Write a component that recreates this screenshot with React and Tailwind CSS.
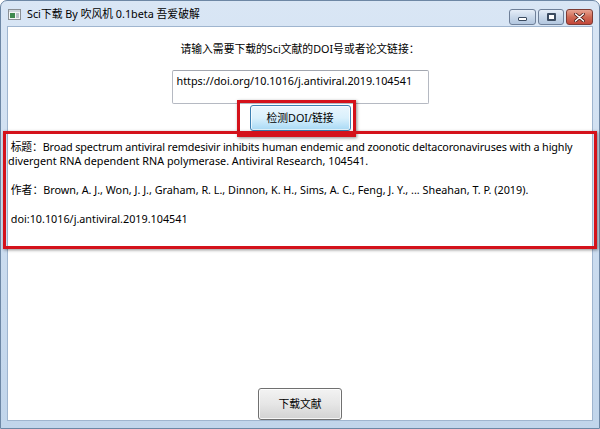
export default function App() {
  const ui = { fontFamily: '"Noto Sans", "Noto Sans CJK SC", sans-serif' };

  return (
    <div className="w-[600px] h-[429px] bg-white text-[10.8px] text-black" style={ui}>
      <div className="relative h-full flex flex-col rounded-t-[7px] border border-[#6d87a5] bg-gradient-to-b from-[#d9e6f5] to-[#c1d5eb]">
        {/* title bar */}
        <div className="h-[25px] flex items-center pl-[7px] pr-[6px]">
          <svg width="13" height="11" viewBox="0 0 13 11" className="mt-[1px]">
            <rect x="0.5" y="0.5" width="12" height="10" fill="#f4f6f6" stroke="#8a8f94" />
            <rect x="1" y="1" width="11" height="2" fill="#cfd6dc" />
            <rect x="2" y="4" width="5" height="5" fill="#3f8a4e" />
            <rect x="8" y="4" width="3" height="5" fill="#b9c2c8" />
          </svg>
          <span className="ml-[6px] text-[10.8px] leading-[16px]">Sci下载 By 吹风机 0.1beta 吾爱破解</span>

          <div className="ml-auto self-end mb-[1px] flex gap-[2px]">
            <div className="w-[27px] h-[16px] rounded-[3px] border border-[#6e7f98] bg-gradient-to-b from-[#e6eef8] via-[#c9d8ea] to-[#b3c7df] flex items-center justify-center">
              <div className="w-[9px] h-[4px] mt-[4px] rounded-[1px] border border-[#3b4b60] bg-white" />
            </div>
            <div className="w-[26px] h-[16px] rounded-[3px] border border-[#6e7f98] bg-gradient-to-b from-[#e6eef8] via-[#c9d8ea] to-[#b3c7df] flex items-center justify-center">
              <div className="w-[9px] h-[8px] rounded-[1px] border-2 border-[#3b4b60] bg-white" />
            </div>
            <div className="w-[27px] h-[16px] rounded-[3px] border border-[#7c3b34] bg-gradient-to-b from-[#e7a392] via-[#cf6a55] to-[#c2463a] flex items-center justify-center">
              <svg width="11" height="9" viewBox="0 0 11 9">
                <path d="M1.5 1 L9.5 8 M9.5 1 L1.5 8" stroke="#4a1a16" strokeWidth="3" strokeLinecap="round" />
                <path d="M1.5 1 L9.5 8 M9.5 1 L1.5 8" stroke="#ffffff" strokeWidth="1.6" strokeLinecap="round" />
              </svg>
            </div>
          </div>
        </div>

        {/* client area */}
        <div className="flex-1 mx-[6px] mb-[7px] bg-white border border-[#9fb5cf] flex flex-col items-center">
          <p className="mt-[14px] leading-[16px]">请输入需要下载的Sci文献的DOI号或者论文链接：</p>

          <div className="mt-[13px] w-[257px] h-[34px] rounded-[2px] border border-[#b5b9c2] border-t-[#a3a7b0] px-[4px] pt-[2px] leading-[16px]">
            https://doi.org/10.1016/j.antiviral.2019.104541
          </div>

          <button className="mt-[1px] w-[101px] h-[26px] rounded-[3px] border border-[#3c7fb1] bg-gradient-to-b from-[#eaf6fd] via-[#d9f0fc] to-[#a7d9f5] shadow-[inset_0_0_0_1px_rgba(255,255,255,0.7)] leading-[16px]">
            检测DOI/链接
          </button>

          <div className="self-stretch mt-[9px] leading-[14.4px]">
            <p>
              <span className="tracking-[-0.12px]">
                {"\u00a0"}标题：Broad spectrum antiviral remdesivir inhibits human endemic and zoonotic deltacoronaviruses with a highly
              </span>
              <br />
              divergent RNA dependent RNA polymerase. Antiviral Research, 104541.
            </p>
            <p className="mt-[14.4px]">
              {"\u00a0"}作者：Brown, A. J., Won, J. J., Graham, R. L., Dinnon, K. H., Sims, A. C., Feng, J. Y., ... Sheahan, T. P. (2019).
            </p>
            <p className="mt-[14.4px]">{"\u00a0"}doi:10.1016/j.antiviral.2019.104541</p>
          </div>

          <button className="mt-auto w-[84px] h-[32px] rounded-[3px] border border-[#707070] bg-gradient-to-b from-[#f3f3f3] via-[#e6e6e6] to-[#d2d2d2] shadow-[inset_0_0_0_1px_rgba(255,255,255,0.8)] leading-[16px]">
            下载文献
          </button>
        </div>

        {/* red highlight boxes */}
        <div className="absolute left-[236px] top-[99px] w-[119px] h-[37px] border-[3px] border-[#d4121b] shadow-[1px_1px_3px_rgba(0,0,0,0.45)]" />
        <div className="absolute left-[2px] top-[130px] w-[594px] h-[118px] border-[3px] border-[#d4121b] shadow-[1px_1px_3px_rgba(0,0,0,0.45)]" />
      </div>
    </div>
  );
}
